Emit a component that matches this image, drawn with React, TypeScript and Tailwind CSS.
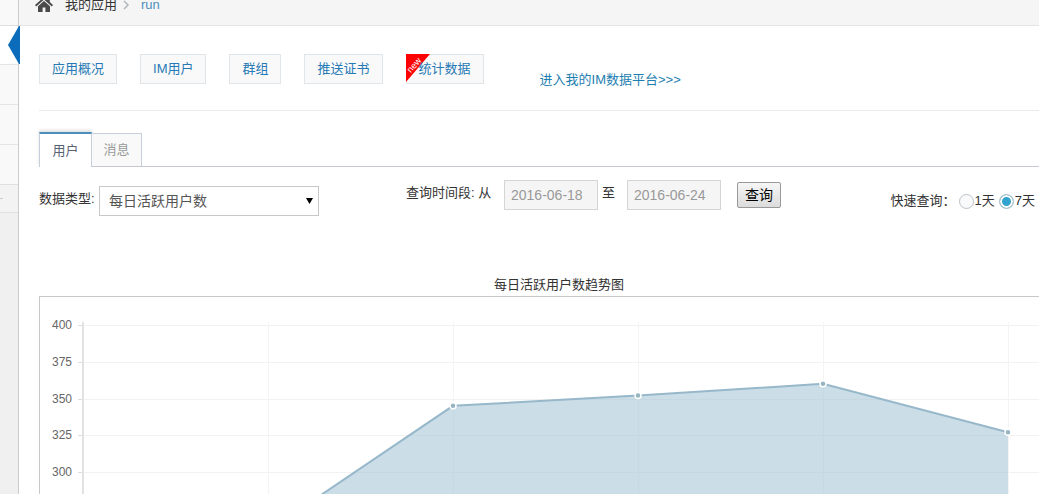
// App statistics page
import React, { useState } from 'react';

const navItems = ['应用概况', 'IM用户', '群组', '推送证书', '统计数据'];
const tabs = ['用户', '消息'];
const metrics = ['每日活跃用户数', '每日新增用户数'];
const ranges = [
  { value: '1', label: '1天' },
  { value: '7', label: '7天' }
];

const ticks = [400, 375, 350, 325, 300];
const users = [228, 260, 345, 352, 360, 327];

const LEFT = 43;
const TOP = 28;
const STEP_X = 185;
const CHART_HEIGHT = 340;

const toX = (index: number) => LEFT + index * STEP_X;
const toY = (value: number) => TOP + ((400 - value) * 147) / 100;

const HomeIcon = () => (
  <svg width="18" height="16" viewBox="0 0 18 16" fill="#4a4a4a" aria-hidden="true">
    <path d="M9 0 0 8l1.2 1.4L9 2.6l7.8 6.8L18 8l-3.2-2.9V1h-2.4v2z" />
    <path d="M9 4 3 9.2V15h4.6v-4.4h2.8V15H15V9.2z" />
  </svg>
);

const Sidebar = () => (
  <aside className="w-[19px] shrink-0 border-r border-[#ccc] bg-[#f0f0f0]">
    <div className="h-[26px] border-b border-[#e0e0e0] bg-[#f9f9f9]"></div>
    <div className="relative h-[39px] border-b border-[#e5e5e5] bg-white">
      <svg className="absolute -right-0.5 top-0" width="12" height="38" aria-hidden="true">
        <path d="M12 0H11L0 19l11 19h1z" fill="#0b6cbc" />
      </svg>
    </div>
    <div className="h-10 border-b border-[#e5e5e5] bg-[#f9f9f9]"></div>
    <div className="h-10 border-b border-[#e5e5e5] bg-[#f9f9f9]"></div>
    <div className="h-10 border-b border-[#e0e0e0] bg-[#f9f9f9]"></div>
    <div className="flex h-7 items-center border-b border-[#e0e0e0] bg-[#f3f3f3]">
      <div className="h-px w-[3px] bg-[#ccc]"></div>
    </div>
  </aside>
);

const NewRibbon = () => (
  <svg className="absolute -left-px -top-px" width="25" height="29" aria-hidden="true">
    <path d="M0 0h24L0 28z" fill="#f00" />
    <text x="8" y="11" fontSize="9" fill="#fff" textAnchor="middle" dominantBaseline="central" transform="rotate(-49 8 11)">
      new
    </text>
  </svg>
);

const TrendChart = () => {
  const points = users.map((value, i) => `${toX(i)},${toY(value)}`).join(' ');
  const bottom = CHART_HEIGHT - 20;

  return (
    <svg className="block w-full" height={CHART_HEIGHT} role="img" aria-label="每日活跃用户数趋势图">
      {ticks.map(tick => (
        <g key={tick}>
          <line x1={LEFT - 5} x2="100%" y1={Math.round(toY(tick)) + 0.5} y2={Math.round(toY(tick)) + 0.5} stroke="#f2f2f2" />
          <line x1={LEFT - 5} x2={LEFT} y1={Math.round(toY(tick)) + 0.5} y2={Math.round(toY(tick)) + 0.5} stroke="#ddd" />
          <text x={LEFT - 11} y={toY(tick) + 4} fontSize="12" fill="#666" textAnchor="end">{tick}</text>
        </g>
      ))}
      {users.map((_, i) => (
        <line key={i} x1={toX(i) + 0.5} x2={toX(i) + 0.5} y1={TOP - 3} y2={bottom} stroke="#f4f4f4" />
      ))}
      <line x1={LEFT} x2={LEFT} y1={TOP - 3} y2={bottom} stroke="#e2e2e2" strokeWidth="2" />
      <polygon points={`${LEFT},${bottom} ${points} ${toX(users.length - 1)},${bottom}`} fill="#97bbcd" fillOpacity="0.5" />
      <polyline points={points} fill="none" stroke="#97b8ca" strokeWidth="2" />
      {users.map((value, i) => (
        <circle key={i} cx={toX(i)} cy={toY(value)} r="3" fill="#97b4c0" stroke="#fff" strokeWidth="1.5" />
      ))}
    </svg>
  );
};

const App = () => {
  const [activeTab, setActiveTab] = useState('用户');
  const [metric, setMetric] = useState('每日活跃用户数');
  const [from, setFrom] = useState('2016-06-18');
  const [to, setTo] = useState('2016-06-24');
  const [range, setRange] = useState('7');

  return (
    <div className="flex h-screen overflow-hidden bg-white font-['Liberation_Sans','Noto_Sans_CJK_SC',sans-serif] text-[13px] leading-5 text-[#333]">
      <Sidebar />
      <div className="flex min-w-0 flex-1 flex-col">
        <header className="-mt-4 flex h-[42px] shrink-0 items-center border-b border-[#e5e5e5] bg-[#f5f5f5] pl-4">
          <HomeIcon />
          <span className="ml-3">我的应用</span>
          <svg className="mx-1.5" width="8" height="10" fill="none" stroke="#b2b6bf" strokeWidth="1.5" aria-hidden="true">
            <path d="M1 1l4 4-4 4" />
          </svg>
          <a href="#run" className="ml-1 text-[#4c8fbd]">run</a>
        </header>

        <main className="pl-5">
          <nav className="flex border-b border-[#eaeaea] pb-5 pt-7">
            <div className="flex gap-[23px] pb-1.5">
              {navItems.map(item => (
                <a
                  key={item}
                  href="#nav"
                  className="relative flex h-[30px] items-center whitespace-nowrap border border-[#e0e5e9] bg-[#f9f9f9] px-3 text-[#2679b5]"
                >
                  {item === '统计数据' && <NewRibbon />}
                  <span className="relative">{item}</span>
                </a>
              ))}
            </div>
            <a href="#platform" className="ml-14 self-end whitespace-nowrap text-[#1d80b0]">进入我的IM数据平台&gt;&gt;&gt;</a>
          </nav>

          <div className="mt-[21px] flex h-[35px] items-end border-b border-[#c5c9cf]" role="tablist">
            {tabs.map(tab => (
              <button
                key={tab}
                role="tab"
                aria-selected={activeTab === tab}
                onClick={() => setActiveTab(tab)}
                className={
                  activeTab === tab
                    ? '-mb-px h-[35px] w-[53px] border-x border-t-2 border-x-[#c5d0dc] border-t-[#4c8fbd] bg-white text-[#576373] shadow-[0_-2px_3px_0_rgba(0,0,0,0.12)]'
                    : 'h-[33px] w-[50px] border-r border-t border-[#c5d0dc] bg-[#f9f9f9] text-[#999]'
                }
              >
                {tab}
              </button>
            ))}
          </div>

          <div className="flex items-start whitespace-nowrap pt-3">
            <div className="mt-[7px] flex items-center">
              <label htmlFor="metric" className="w-[60px] pb-1">数据类型:</label>
              <div className="relative">
                <select
                  id="metric"
                  value={metric}
                  onChange={e => setMetric(e.target.value)}
                  className="h-[30px] w-[220px] appearance-none border border-[#c8c8c8] bg-white px-[9px] text-[14px] text-[#555]"
                >
                  {metrics.map(name => (
                    <option key={name}>{name}</option>
                  ))}
                </select>
                <svg className="pointer-events-none absolute right-1.5 top-3" width="7" height="6" aria-hidden="true">
                  <path d="M0 0h7L3.500 6z" fill="#000" />
                </svg>
              </div>
            </div>

            <div className="ml-[87px] mt-px flex items-center">
              <label htmlFor="from" className="w-[98px] pb-1">查询时间段: 从</label>
              <input
                id="from"
                value={from}
                onChange={e => setFrom(e.target.value)}
                className="h-[30px] w-[94px] border border-[#d5d5d5] bg-[#f5f5f5] px-1.5 text-[14px] text-[#999]"
              />
              <label htmlFor="to" className="w-[29px] pb-1 pl-1">至</label>
              <input
                id="to"
                value={to}
                onChange={e => setTo(e.target.value)}
                className="h-[30px] w-[94px] border border-[#d5d5d5] bg-[#f5f5f5] px-1.5 text-[14px] text-[#999]"
              />
              <button className="ml-4 h-[26px] w-11 rounded-xs border border-[#999] bg-linear-to-b from-[#f6f6f6] to-[#dcdcdc] text-[14px] text-black">
                查询
              </button>
            </div>

            <fieldset className="ml-auto mt-3 flex items-center pr-1">
              <legend className="float-left mr-[3px]">快速查询：</legend>
              <div className="flex gap-1">
                {ranges.map(item => (
                  <label key={item.value} className="flex items-center">
                    <input
                      type="radio"
                      name="range"
                      value={item.value}
                      checked={range === item.value}
                      onChange={() => setRange(item.value)}
                      className="mr-px size-[15px] appearance-none rounded-full border border-[#b9c3ca] bg-[#fafafa] checked:bg-[#32a3ce] checked:shadow-[inset_0_0_0_2px_#fff]"
                    />
                    {item.label}
                  </label>
                ))}
              </div>
            </fieldset>
          </div>

          <h2 className="mt-[59px] pl-10 text-center">每日活跃用户数趋势图</h2>
          <div className="mt-px border-l border-t border-[#c8c8c8]">
            <TrendChart />
          </div>
        </main>
      </div>
    </div>
  );
};

export default App;
